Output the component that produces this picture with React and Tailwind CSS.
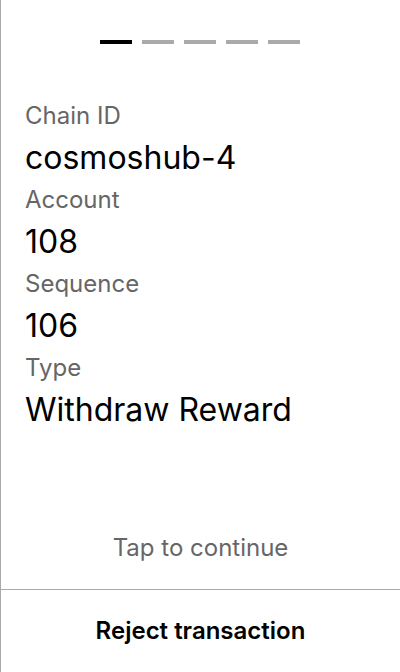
export default function App() {
  const fields = [
    { label: 'Chain ID', value: 'cosmoshub-4' },
    { label: 'Account', value: '108' },
    { label: 'Sequence', value: '106' },
    { label: 'Type', value: 'Withdraw Reward' },
  ];

  return (
    <div
      className="h-[672px] w-[400px] flex flex-col bg-white border-l border-[#aaaaaa]"
      style={{ fontFamily: 'Inter, "Noto Sans", sans-serif' }}
    >
      <div className="flex justify-center gap-[10px] pt-10 -ml-px">
        {[0, 1, 2, 3, 4].map((i) => (
          <div
            key={i}
            className={i === 0 ? 'h-1 w-8 bg-black' : 'h-1 w-8 bg-[#aaaaaa]'}
          />
        ))}
      </div>

      <div className="px-6 pt-[54px]">
        {fields.map((f) => (
          <div key={f.label}>
            <div className="text-[24px] leading-[36px] text-[#666666]">{f.label}</div>
            <div className="text-[32px] leading-[48px] text-black">{f.value}</div>
          </div>
        ))}
      </div>

      <div className="flex-1" />

      <div className="text-center text-[24px] leading-[28px] text-[#666666] pb-[27px]">
        Tap to continue
      </div>
      <button className="h-[83px] border-t border-[#aaaaaa] text-[24px] font-semibold text-black">
        Reject transaction
      </button>
    </div>
  );
}
